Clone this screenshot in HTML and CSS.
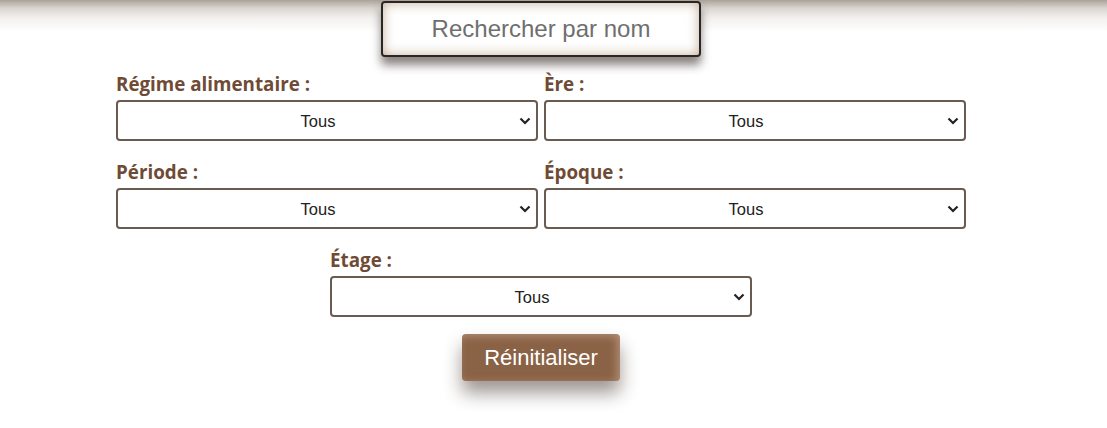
FILE: index.html
```html
<!DOCTYPE html>
<html lang="fr">
<head>
<meta charset="utf-8">
<title>Filtres</title>
<link rel="stylesheet" href="styles.css">
</head>
<body>
<main class="page">
  <input class="search" type="text" placeholder="Rechercher par nom">
  <form class="filters">
    <div class="field">
      <label class="label" for="regime">Régime alimentaire :</label>
      <select class="select" id="regime"><option>Tous</option></select>
    </div>
    <div class="field">
      <label class="label" for="ere">Ère :</label>
      <select class="select" id="ere"><option>Tous</option></select>
    </div>
    <div class="field">
      <label class="label" for="periode">Période :</label>
      <select class="select" id="periode"><option>Tous</option></select>
    </div>
    <div class="field">
      <label class="label" for="epoque">Époque :</label>
      <select class="select" id="epoque"><option>Tous</option></select>
    </div>
    <div class="field field-center">
      <label class="label" for="etage">Étage :</label>
      <select class="select" id="etage"><option>Tous</option></select>
    </div>
  </form>
  <button class="reset" type="button">Réinitialiser</button>
</main>
</body>
</html>
```

FILE: styles.css
```css
html, body {
  margin: 0;
  padding: 0;
}
body {
  background: #fff linear-gradient(to bottom, #aba199 0px, #d9d4d0 8px, #f3f1ef 18px, #ffffff 32px) no-repeat;
  background-size: 100% 34px;
  height: 428px;
  overflow: hidden;
  font-family: "Liberation Sans", Arial, sans-serif;
}
.page {
  width: 1082px;
  display: flex;
  flex-direction: column;
  align-items: center;
  padding-top: 1px;
}
.search {
  box-sizing: border-box;
  width: 320px;
  height: 56px;
  border: 2px solid #2a2624;
  border-radius: 4px;
  background: #fff;
  box-shadow: inset 0 0 12px rgba(150, 105, 70, 0.55), 0 8px 10px rgba(40, 30, 25, 0.55);
  font-family: "Liberation Sans", Arial, sans-serif;
  font-size: 24px;
  text-align: center;
  color: #333;
  outline: none;
}
.search::placeholder {
  color: #6f6f6f;
}
.filters {
  margin-top: 16px;
  display: grid;
  grid-template-columns: 422px 422px;
  column-gap: 6px;
  row-gap: 20px;
}
.field {
  display: flex;
  flex-direction: column;
}
.field-center {
  grid-column: 1 / span 2;
  justify-self: center;
  width: 422px;
}
.label {
  font-family: "Open Sans", "Noto Sans", sans-serif;
  font-weight: 700;
  font-size: 18.8px;
  line-height: 22px;
  color: #6f4b35;
  margin-bottom: 5px;
}
.select {
  -webkit-appearance: none;
  appearance: none;
  box-sizing: border-box;
  width: 100%;
  height: 41px;
  padding: 0 20px 0 2px;
  border: 2px solid #6b5a50;
  border-radius: 4px;
  background-color: #fff;
  background-image: url("data:image/svg+xml;utf8,<svg xmlns='http://www.w3.org/2000/svg' width='12' height='8' viewBox='0 0 12 8'><path d='M1.5 1.5 L6 6 L10.5 1.5' fill='none' stroke='%23222' stroke-width='2.2'/></svg>");
  background-repeat: no-repeat;
  background-position: right 5px center;
  background-size: 12px 8px;
  font-family: "Liberation Sans", Arial, sans-serif;
  font-size: 16.5px;
  color: #222;
  text-align: center;
  text-align-last: center;
}
.reset {
  margin-top: 17px;
  width: 158px;
  height: 47px;
  border: none;
  border-radius: 4px;
  background: #8a6246;
  color: #fff;
  font-family: "Liberation Sans", Arial, sans-serif;
  font-size: 22px;
  box-shadow: inset -3px 2px 8px rgba(255, 230, 210, 0.35), 0 12px 18px rgba(40, 25, 15, 0.45);
  cursor: pointer;
}
```
